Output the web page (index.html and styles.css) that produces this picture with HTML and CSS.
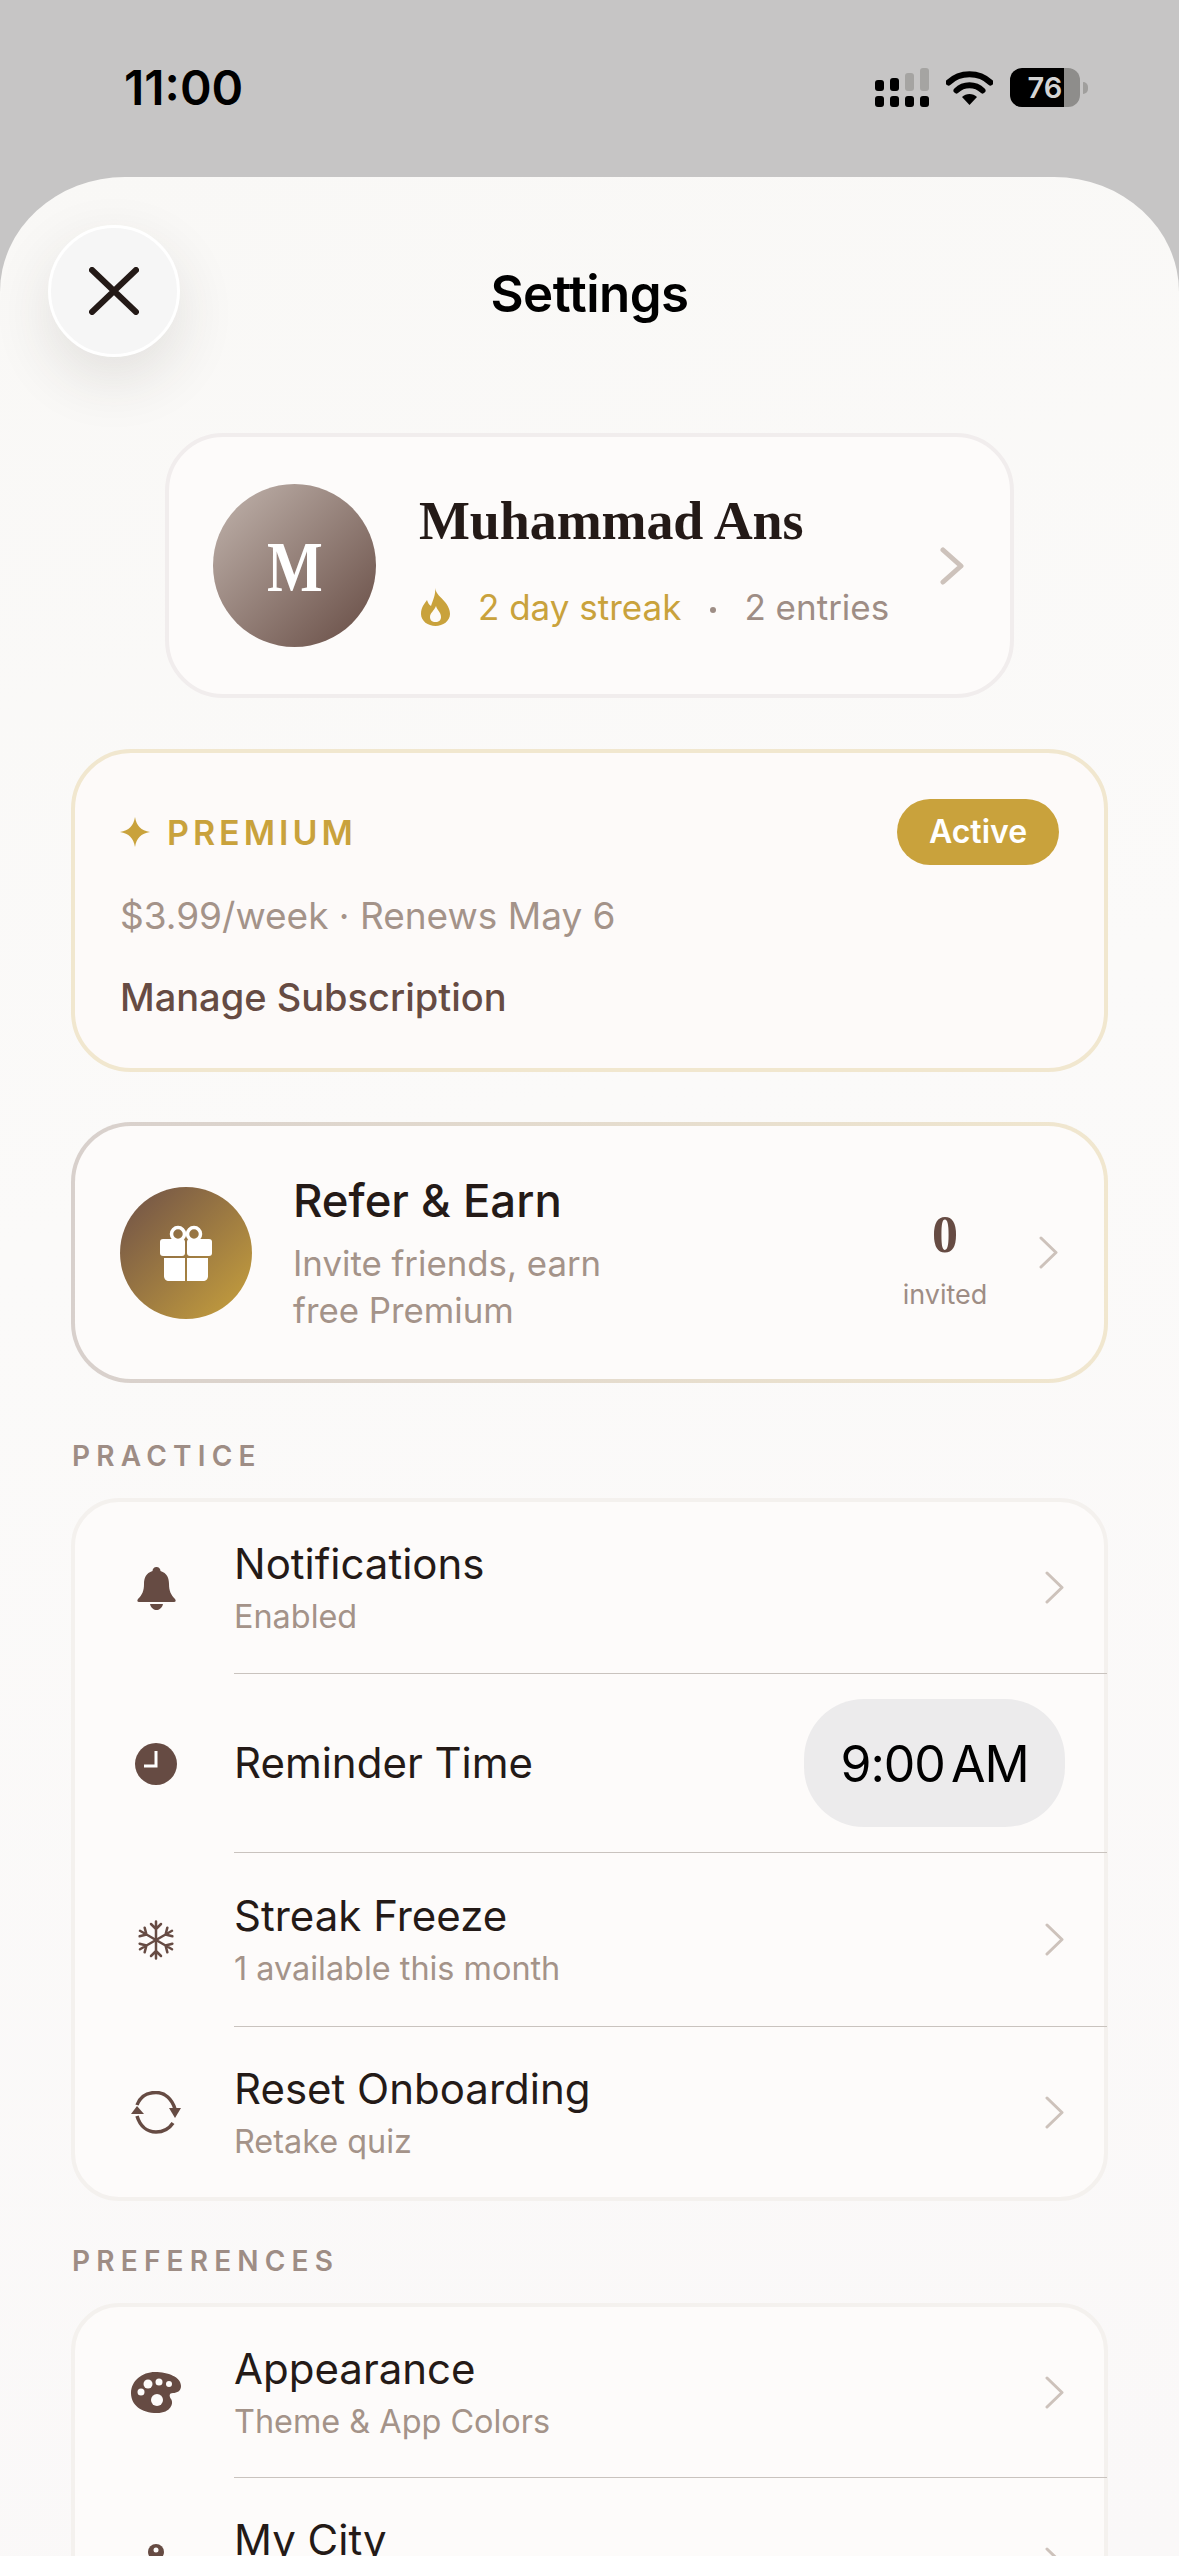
FILE: index.html
```html
<!DOCTYPE html>
<html lang="en">
  <head>
    <meta charset="UTF-8" />
    <meta name="viewport" content="width=device-width, initial-scale=1.0" />
    <title>Settings</title>
    <link rel="stylesheet" href="styles.css">
  </head>
  <body>
    <div class="status">
      <div class="clock">11:00</div>
      <div class="status-icons">
        <svg class="signal" width="54" height="39" viewBox="0 0 54 39">
          <g fill="#000">
            <rect x="0" y="12" width="9" height="11" rx="3" />
            <rect x="15" y="10" width="9" height="13" rx="3" />
            <rect x="0" y="28" width="9" height="11" rx="3" />
            <rect x="15" y="28" width="9" height="11" rx="3" />
            <rect x="30" y="28" width="9" height="11" rx="3" />
            <rect x="45" y="28" width="9" height="11" rx="3" />
          </g>
          <g fill="#a5a4a2">
            <rect x="30" y="5" width="9" height="18" rx="3" />
            <rect x="45" y="0" width="9" height="23" rx="3" />
          </g>
        </svg>
        <svg class="wifi" width="47" height="35" viewBox="0 0 47 35">
          <path d="M2.5 12.5C14 1.5 33 1.5 44.5 12.5" fill="none" stroke="#000" stroke-width="6" stroke-linecap="round" />
          <path d="M10.5 20.5C17.5 13.5 29.5 13.5 36.5 20.5" fill="none" stroke="#000" stroke-width="6" stroke-linecap="round" />
          <path d="M16 27L23.5 35L31 27C27 23 20 23 16 27Z" fill="#000" />
        </svg>
        <div class="battery"><span>76</span></div>
        <div class="battery-tip"></div>
      </div>
    </div>

    <div class="sheet">
      <div class="header">
        <div class="close">
          <svg width="50" height="48" viewBox="0 0 50 48">
            <path d="M3 3L47 45M47 3L3 45" fill="none" stroke="#241a17" stroke-width="6" stroke-linecap="round" />
          </svg>
        </div>
        <div class="title">Settings</div>
      </div>

      <div class="profile">
        <div class="avatar"><span>M</span></div>
        <div class="profile-info">
          <div class="name">Muhammad Ans</div>
          <div class="meta">
            <svg class="flame" width="29" height="38" viewBox="0 0 29 38">
              <path d="M14 0C15 6 20 9 24 14C28 19 29 23 29 26C29 33 22 38 14.5 38C7 38 0 33 0 26C0 19 4 15 6 12C7 15 8 17 10 18C12 12 15 6 14 0Z" fill="#c9a23c" />
              <path d="M15 18C16 22 20 24 20 29C20 32 18 34 14.5 34C11 34 9 32 9 29C9 25 13 23 15 18Z" fill="#fdfbfa" />
            </svg>
            <span class="streak">2 day streak</span>
            <span class="dot"></span>
            <span class="entries">2 entries</span>
          </div>
        </div>
        <svg class="chev-big" width="24" height="38" viewBox="0 0 24 38">
          <path d="M3 3L21 19L3 35" fill="none" stroke="#cdc2bb" stroke-width="5" stroke-linecap="round" stroke-linejoin="round" />
        </svg>
      </div>

      <div class="premium">
        <div class="premium-top">
          <div class="premium-label">
            <svg width="30" height="30" viewBox="0 0 28 28">
              <path d="M14 0C15.500 8.500 19.500 12.500 28 14C19.500 15.500 15.500 19.500 14 28C12.500 19.500 8.500 15.500 0 14C8.500 12.500 12.500 8.500 14 0Z" fill="#c9a23c" />
            </svg>
            <span>PREMIUM</span>
          </div>
          <div class="badge">Active</div>
        </div>
        <div class="price">$3.99/week · Renews May 6</div>
        <div class="manage">Manage Subscription</div>
      </div>

      <div class="refer">
        <div class="gift">
          <svg width="52" height="56" viewBox="0 0 52 56">
            <circle cx="18" cy="9" r="6.5" fill="none" stroke="#fff" stroke-width="3.5" />
            <circle cx="34" cy="9" r="6.5" fill="none" stroke="#fff" stroke-width="3.5" />
            <rect x="0" y="14" width="25" height="17" rx="3" fill="#fff" />
            <rect x="27" y="14" width="25" height="17" rx="3" fill="#fff" />
            <path d="M4 33H25V56H9C6 56 4 54 4 51Z" fill="#fff" />
            <path d="M27 33H48V51C48 54 46 56 43 56H27Z" fill="#fff" />
          </svg>
        </div>
        <div class="refer-text">
          <div class="refer-title">Refer &amp; Earn</div>
          <div class="refer-sub">Invite friends, earn<br>free Premium</div>
        </div>
        <div class="invited">
          <div class="invited-num">0</div>
          <div class="invited-label">invited</div>
        </div>
        <svg class="chev" width="19" height="33" viewBox="0 0 19 33">
          <path d="M2 2L17 16.5L2 31" fill="none" stroke="#cdc2bb" stroke-width="3" stroke-linecap="round" stroke-linejoin="round" />
        </svg>
      </div>

      <div class="section-label first">PRACTICE</div>
      <div class="list">
        <div class="row row-a">
          <div class="row-icon">
            <svg width="39" height="43" viewBox="0 0 39 43">
              <path d="M19.5 0C17 0 15.5 2 15.5 4C9 6 7 11 7 17C7 24 5 28 1 32C0 33 0 35 2 35H37C39 35 39 33 38 32C34 28 32 24 32 17C32 11 30 6 23.5 4C23.500 2 22 0 19.5 0Z" fill="#664b43" />
              <path d="M13 37H26C25 41 22 43 19.500 43C17 43 14 41 13 37Z" fill="#664b43" />
            </svg>
          </div>
          <div class="row-body">
            <div class="row-text">
              <div class="row-title">Notifications</div>
              <div class="row-sub">Enabled</div>
            </div>
            <svg class="chev" width="19" height="33" viewBox="0 0 19 33">
              <path d="M2 2L17 16.5L2 31" fill="none" stroke="#cdc2bb" stroke-width="3" stroke-linecap="round" stroke-linejoin="round" />
            </svg>
          </div>
        </div>
        <div class="row row-b">
          <div class="row-icon">
            <svg width="42" height="42" viewBox="0 0 42 42">
              <circle cx="21" cy="21" r="21" fill="#664b43" />
              <path d="M21 8V23H9" fill="none" stroke="#fff" stroke-width="3" />
            </svg>
          </div>
          <div class="row-body">
            <div class="row-text">
              <div class="row-title">Reminder Time</div>
            </div>
            <div class="time-pill">9:00 AM</div>
          </div>
        </div>
        <div class="row row-c">
          <div class="row-icon">
            <svg width="38" height="40" viewBox="0 0 38 40">
              <g fill="none" stroke="#664b43" stroke-width="2.500" stroke-linecap="round" stroke-linejoin="round">
                <g id="arm">
                  <path d="M19 20V1.500M14 4L19 9L24 4M19 20V38.500M14 36L19 31L24 36" />
                </g>
                <use href="#arm" transform="rotate(60 19 20)" />
                <use href="#arm" transform="rotate(120 19 20)" />
              </g>
            </svg>
          </div>
          <div class="row-body">
            <div class="row-text">
              <div class="row-title">Streak Freeze</div>
              <div class="row-sub">1 available this month</div>
            </div>
            <svg class="chev" width="19" height="33" viewBox="0 0 19 33">
              <path d="M2 2L17 16.5L2 31" fill="none" stroke="#cdc2bb" stroke-width="3" stroke-linecap="round" stroke-linejoin="round" />
            </svg>
          </div>
        </div>
        <div class="row row-d">
          <div class="row-icon">
            <svg width="50" height="43" viewBox="0 0 50 43">
              <path d="M6 14C9 6 16 1.500 25 1.500C34 1.500 41 8 44 18" fill="none" stroke="#664b43" stroke-width="3.500" />
              <path d="M6 25C9 35 16 41 25 41C32 41 38 38 42 32" fill="none" stroke="#664b43" stroke-width="3.500" />
              <path d="M38 17H50L44 27Z" fill="#664b43" />
              <path d="M0 23H13L6 15Z" fill="#664b43" />
            </svg>
          </div>
          <div class="row-body no-line">
            <div class="row-text">
              <div class="row-title">Reset Onboarding</div>
              <div class="row-sub">Retake quiz</div>
            </div>
            <svg class="chev" width="19" height="33" viewBox="0 0 19 33">
              <path d="M2 2L17 16.5L2 31" fill="none" stroke="#cdc2bb" stroke-width="3" stroke-linecap="round" stroke-linejoin="round" />
            </svg>
          </div>
        </div>
      </div>

      <div class="section-label second">PREFERENCES</div>
      <div class="list">
        <div class="row row-e">
          <div class="row-icon">
            <svg width="50" height="41" viewBox="0 0 50 41">
              <path d="M24 0C37 0 50 5 50 14C50 19 46 21 42 21C38 21 38 24 40 27C43 31 40 41 26 41C10 41 0 33 0 21C0 9 11 0 24 0Z" fill="#664b43" />
              <g fill="#fdfbfa">
                <circle cx="17" cy="12" r="4.500" />
                <circle cx="28" cy="10" r="3.500" />
                <circle cx="38" cy="12" r="3" />
                <circle cx="10" cy="20" r="3.500" />
                <circle cx="26" cy="28" r="6" />
              </g>
            </svg>
          </div>
          <div class="row-body">
            <div class="row-text">
              <div class="row-title">Appearance</div>
              <div class="row-sub">Theme &amp; App Colors</div>
            </div>
            <svg class="chev" width="19" height="33" viewBox="0 0 19 33">
              <path d="M2 2L17 16.5L2 31" fill="none" stroke="#cdc2bb" stroke-width="3" stroke-linecap="round" stroke-linejoin="round" />
            </svg>
          </div>
        </div>
        <div class="row row-e">
          <div class="row-icon">
            <svg width="20" height="42" viewBox="0 0 20 42">
              <circle cx="10" cy="9" r="8" fill="#664b43" />
              <circle cx="10" cy="7" r="2.500" fill="#fdfbfa" />
              <rect x="8" y="15" width="4" height="27" fill="#664b43" />
            </svg>
          </div>
          <div class="row-body no-line">
            <div class="row-text">
              <div class="row-title">My City</div>
              <div class="row-sub">&nbsp;</div>
            </div>
            <svg class="chev" width="19" height="33" viewBox="0 0 19 33">
              <path d="M2 2L17 16.5L2 31" fill="none" stroke="#cdc2bb" stroke-width="3" stroke-linecap="round" stroke-linejoin="round" />
            </svg>
          </div>
        </div>
      </div>
    </div>
  </body>
</html>
```

FILE: styles.css
```css
html,
body {
  margin: 0;
  padding: 0;
  height: 2556px;
  overflow: hidden;
}
body {
  background: #c6c5c5;
  font-family: "Inter", "Noto Sans", sans-serif;
  color: #241a17;
}

/* status bar */
.status {
  height: 177px;
  box-sizing: border-box;
  padding: 68px 91px 0 124px;
  display: flex;
  justify-content: space-between;
  align-items: flex-start;
}
.clock {
  font-size: 48px;
  font-weight: 600;
  line-height: 40px;
  letter-spacing: 0;
  color: #000;
}
.status-icons {
  display: flex;
  align-items: flex-start;
}
.wifi {
  margin: 2px 17px 0 17px;
}
.battery {
  width: 70px;
  height: 39px;
  border-radius: 12px;
  background: linear-gradient(90deg, #000 77%, #8e8d8b 77%);
  color: #d4d4d4;
  font-size: 29px;
  font-weight: 600;
  line-height: 39px;
  text-align: center;
}
.battery-tip {
  width: 5px;
  height: 12px;
  margin: 14px 0 0 3px;
  background: #a09f9d;
  border-radius: 0 6px 6px 0;
}

/* sheet */
.sheet {
  height: 2379px;
  box-sizing: border-box;
  padding-top: 48px;
  border-radius: 125px 125px 0 0 / 115px 115px 0 0;
  background: linear-gradient(165deg, #f9f8f6 0%, #fbfaf9 40%, #faf8f8 100%);
}
.header {
  display: grid;
  grid-template-columns: 132px 1fr 132px;
  padding: 0 48px;
  align-items: center;
}
.close {
  width: 132px;
  height: 132px;
  box-sizing: border-box;
  border: 3px solid #fff;
  border-radius: 50%;
  background: #f6f6f6;
  box-shadow: 0 22px 60px rgba(60, 50, 45, 0.12);
  display: flex;
  align-items: center;
  justify-content: center;
}
.title {
  padding-top: 5px;
  text-align: center;
  font-size: 51px;
  font-weight: 600;
  letter-spacing: -0.5px;
  color: #000;
}

/* profile */
.profile {
  width: 849px;
  height: 265px;
  box-sizing: border-box;
  margin: 76px auto 0;
  padding: 0 46px 0 44px;
  border: 4px solid #f1eded;
  border-radius: 58px;
  background: #fdfbfa;
  display: flex;
  align-items: center;
}
.avatar {
  width: 163px;
  height: 163px;
  box-sizing: border-box;
  padding-top: 3px;
  border-radius: 50%;
  background: linear-gradient(135deg, #c2b5ae 0%, #664b43 100%);
  color: #fff;
  font-family: "Liberation Serif", serif;
  font-weight: 700;
  font-size: 72px;
  display: flex;
  align-items: center;
  justify-content: center;
  flex: none;
}
.avatar span {
  display: inline-block;
  transform: scaleX(0.82);
}
.profile-info {
  margin-left: 43px;
  flex: 1;
}
.name {
  font-family: "Liberation Serif", serif;
  font-weight: 700;
  font-size: 54px;
  line-height: 60px;
  letter-spacing: -0.1px;
  color: #241a17;
}
.meta {
  margin-top: 34px;
  margin-bottom: 11px;
  display: flex;
  align-items: center;
  font-size: 35px;
  line-height: 44px;
}
.flame {
  margin: 0 28px 0 2px;
}
.streak {
  color: #c9a23c;
}
.dot {
  width: 6px;
  height: 6px;
  margin: 6px 28px 0 29px;
  border-radius: 50%;
  background: #9e8d85;
}
.entries {
  color: #9e8d85;
}

/* premium */
.premium {
  height: 323px;
  box-sizing: border-box;
  margin: 51px 71px 0;
  padding: 46px 45px 0 45px;
  border: 4px solid #f1e7cf;
  border-radius: 60px;
  background: #fdfaf9;
}
.premium-top {
  display: flex;
  align-items: center;
  justify-content: space-between;
}
.premium-label {
  display: flex;
  align-items: center;
  gap: 17px;
  font-size: 34px;
  font-weight: 600;
  letter-spacing: 4px;
  color: #c9a23c;
}
.badge {
  width: 162px;
  height: 66px;
  border-radius: 33px;
  background: #c9a23c;
  color: #fff;
  font-size: 32px;
  font-weight: 600;
  line-height: 66px;
  text-align: center;
}
.price {
  margin-top: 26px;
  font-size: 37px;
  line-height: 50px;
  color: #a49389;
}
.manage {
  margin-top: 31px;
  font-size: 38px;
  font-weight: 450;
  line-height: 50px;
  color: #664b43;
}

/* refer */
.refer {
  height: 261px;
  box-sizing: border-box;
  margin: 50px 71px 0;
  padding: 0 46px 0 45px;
  border: 4px solid transparent;
  border-radius: 60px;
  background: linear-gradient(#fdfbfa, #fdfbfa) padding-box,
    linear-gradient(90deg, #d8d0cc 0%, #f1e7cf 100%) border-box;
  display: flex;
  align-items: center;
}
.gift {
  width: 132px;
  height: 132px;
  border-radius: 50%;
  background: linear-gradient(135deg, #6e5048 0%, #c9a23c 100%);
  display: flex;
  align-items: center;
  justify-content: center;
  flex: none;
}
.refer-text {
  margin-left: 41px;
  padding-top: 2px;
  flex: 1;
}
.refer-title {
  font-size: 45.5px;
  font-weight: 500;
  line-height: 54px;
  color: #241a17;
}
.refer-sub {
  margin-top: 12px;
  font-size: 34.8px;
  line-height: 47px;
  color: #a49389;
}
.invited {
  width: 140px;
  padding-top: 12px;
  text-align: center;
  margin-right: 24px;
}
.invited-num {
  font-family: "Liberation Serif", serif;
  font-weight: 700;
  font-size: 52px;
  line-height: 60px;
  color: #664b43;
}
.invited-label {
  margin-top: 12px;
  font-size: 27px;
  line-height: 36px;
  color: #9e8d85;
}

/* lists */
.section-label {
  margin: 0 71px;
  padding-left: 1px;
  font-size: 28px;
  font-weight: 600;
  letter-spacing: 6.2px;
  line-height: 34px;
  color: #9e8d85;
}
.section-label.first {
  margin-top: 56px;
}
.section-label.second {
  margin-top: 43px;
}
.list {
  margin: 25px 71px 0;
  border: 4px solid #f4f1ee;
  border-radius: 48px;
  background: #fdfbfa;
}
.row {
  display: flex;
  align-items: stretch;
}
.row-a {
  height: 172px;
}
.row-b {
  height: 179px;
}
.row-c {
  height: 174px;
}
.row-d {
  height: 170px;
}
.row-e {
  height: 171px;
}
.row-icon {
  width: 159px;
  padding-left: 3px;
  box-sizing: border-box;
  display: flex;
  align-items: center;
  justify-content: center;
  flex: none;
}
.row-body {
  flex: 1;
  box-sizing: border-box;
  margin-right: -3px;
  padding-right: 43px;
  border-bottom: 1px solid #c9c3be;
  display: flex;
  align-items: center;
  justify-content: space-between;
}
.row-body.no-line {
  border-bottom: none;
}
.row-title {
  font-size: 42px;
  line-height: 52px;
  color: #241a17;
}
.row-sub {
  margin-top: 7px;
  font-size: 32.4px;
  line-height: 40px;
  color: #a49389;
}
.time-pill {
  width: 261px;
  height: 128px;
  margin-right: -1px;
  border-radius: 60px;
  background: #ecebec;
  color: #000;
  font-size: 50px;
  line-height: 131px;
  text-align: center;
  letter-spacing: -1px;
  word-spacing: -7px;
}
```
